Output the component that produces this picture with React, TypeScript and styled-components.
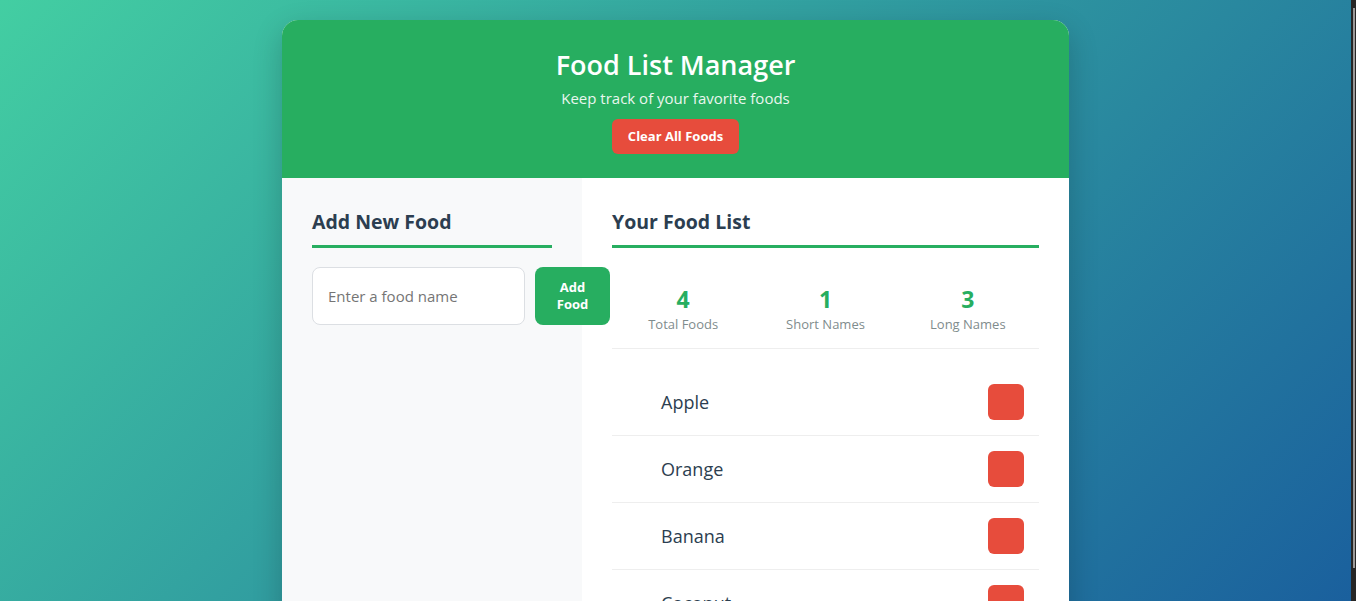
import React from "react";
import styled, { createGlobalStyle } from "styled-components";

const GlobalStyle = createGlobalStyle`
  * { box-sizing: border-box; }
  html, body { margin: 0; padding: 0; }
  body {
    font-family: "Open Sans", "Noto Sans", sans-serif;
    background: linear-gradient(135deg, #43cea2 0%, #185a9d 100%);
    min-height: 100vh;
  }
`;

const Page = styled.div`
  padding: 20px 25px 20px 20px;
  min-height: 100vh;
`;

const ScrollTrack = styled.div`
  position: fixed;
  top: 0;
  right: 0;
  bottom: 0;
  width: 5px;
  background: #262626;
  &::after {
    content: "";
    position: absolute;
    top: 8px;
    right: 1px;
    width: 2px;
    height: 560px;
    background: #9a9a9a;
  }
`;

const Card = styled.div`
  width: 787px;
  margin: 0 auto;
  background: #fff;
  border-radius: 16px;
  overflow: hidden;
  box-shadow: 0 10px 30px rgba(0, 0, 0, 0.2);
`;

const Header = styled.header`
  background: #27ae60;
  color: #fff;
  text-align: center;
  padding: 29px 20px 24px;
  display: flex;
  flex-direction: column;
  align-items: center;
`;

const Title = styled.h1`
  margin: 0 0 8px;
  font-size: 27px;
  font-weight: 600;
  line-height: 1.2;
`;

const Subtitle = styled.p`
  margin: 0 0 10px;
  font-size: 15px;
  line-height: 1.3;
  opacity: 0.9;
`;

const DangerButton = styled.button`
  font-family: inherit;
  background: #e74c3c;
  color: #fff;
  border: none;
  border-radius: 6px;
  height: 35px;
  padding: 0 16px;
  font-size: 13px;
  font-weight: 700;
  cursor: pointer;
`;

const Body = styled.div`
  display: grid;
  grid-template-columns: 300px 1fr;
  min-height: 500px;
`;

const Column = styled.section<{ $muted?: boolean }>`
  padding: 30px;
  background: ${(p) => (p.$muted ? "#f8f9fa" : "#fff")};
  min-width: 0;
`;

const SectionTitle = styled.h2`
  margin: 0 0 19px;
  font-size: 19.5px;
  font-weight: 700;
  line-height: 27px;
  color: #2c3e50;
  padding-bottom: 10px;
  border-bottom: 3px solid #27ae60;
`;

const FormRow = styled.div`
  display: flex;
  gap: 10px;
  align-items: stretch;
`;

const Input = styled.input`
  width: 213px;
  flex-shrink: 0;
  height: 58px;
  padding: 0 15px;
  border: 1px solid #dcdfe3;
  border-radius: 8px;
  font-family: inherit;
  font-size: 15px;
  color: #2c3e50;
  background: #fff;
  &::placeholder { color: #757575; }
`;

const AddButton = styled.button`
  position: relative;
  z-index: 1;
  width: 75px;
  flex-shrink: 0;
  height: 58px;
  background: #27ae60;
  color: #fff;
  border: none;
  border-radius: 8px;
  font-family: inherit;
  font-size: 13px;
  font-weight: 700;
  line-height: 1.3;
  padding: 0 14px;
`;

const Stats = styled.div`
  display: grid;
  grid-template-columns: repeat(3, 1fr);
  padding: 18px 0 15px;
  border-bottom: 1px solid #eee;
  text-align: center;
`;

const StatValue = styled.div`
  font-size: 23px;
  font-weight: 700;
  color: #27ae60;
  line-height: 28px;
`;

const StatLabel = styled.div`
  margin-top: 2px;
  font-size: 13px;
  color: #7f8c8d;
  line-height: 18px;
`;

const List = styled.ul`
  list-style: none;
  margin: 20px 0 0;
  padding: 0;
`;

const Item = styled.li`
  display: flex;
  align-items: center;
  justify-content: space-between;
  padding: 15px 15px 15px 49px;
  border-bottom: 1px solid #eee;
`;

const ItemName = styled.span`
  font-size: 18px;
  color: #2c3e50;
`;

const DeleteButton = styled.button`
  width: 36px;
  height: 36px;
  border: none;
  border-radius: 6px;
  background: #e74c3c;
  cursor: pointer;
`;

const foods = ["Apple", "Orange", "Banana", "Coconut"];

export default function App() {
  const short = foods.filter((f) => f.length <= 5).length;
  return (
    <>
      <GlobalStyle />
      <Page>
        <Card>
          <Header>
            <Title>Food List Manager</Title>
            <Subtitle>Keep track of your favorite foods</Subtitle>
            <DangerButton>Clear All Foods</DangerButton>
          </Header>
          <Body>
            <Column $muted>
              <SectionTitle>Add New Food</SectionTitle>
              <FormRow>
                <Input placeholder="Enter a food name" />
                <AddButton>Add Food</AddButton>
              </FormRow>
            </Column>
            <Column>
              <SectionTitle>Your Food List</SectionTitle>
              <Stats>
                <div>
                  <StatValue>{foods.length}</StatValue>
                  <StatLabel>Total Foods</StatLabel>
                </div>
                <div>
                  <StatValue>{short}</StatValue>
                  <StatLabel>Short Names</StatLabel>
                </div>
                <div>
                  <StatValue>{foods.length - short}</StatValue>
                  <StatLabel>Long Names</StatLabel>
                </div>
              </Stats>
              <List>
                {foods.map((f) => (
                  <Item key={f}>
                    <ItemName>{f}</ItemName>
                    <DeleteButton aria-label={`Delete ${f}`} />
                  </Item>
                ))}
              </List>
            </Column>
          </Body>
        </Card>
      </Page>
      <ScrollTrack />
    </>
  );
}
